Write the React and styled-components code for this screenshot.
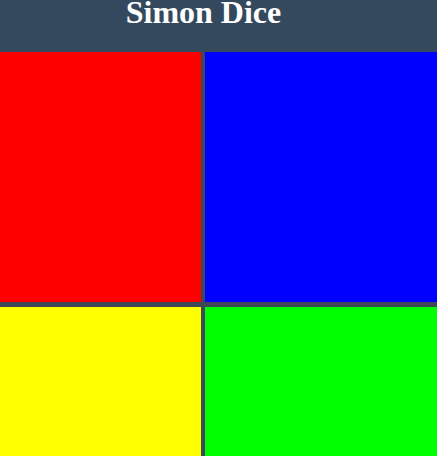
import React from "react";
import styled, { createGlobalStyle } from "styled-components";

const Global = createGlobalStyle`
  html, body { margin: 0; padding: 0; background: #3e4856; overflow: hidden; }
  #root { width: 437px; height: 456px; }
`;

const Page = styled.div`
  display: flex;
  flex-direction: column;
  width: 437px;
  height: 456px;
`;

const Header = styled.header`
  height: 52px;
  background: #34495e;
  display: flex;
  justify-content: center;
  align-items: flex-start;
  padding-right: 30px;
  box-sizing: border-box;
`;

const Title = styled.h1`
  margin: 0;
  font-family: "Liberation Serif", "Times New Roman", serif;
  font-weight: bold;
  font-size: 32px;
  line-height: 24px;
  color: #ffffff;
`;

const Board = styled.div`
  flex: 1;
  display: grid;
  grid-template-columns: 201px 1fr;
  grid-template-rows: 250px 1fr;
  column-gap: 4px;
  row-gap: 5px;
  background: #3e4856;
`;

const Pad = styled.div`
  background: ${(p) => p.$color};
`;

export default function App() {
  return (
    <Page>
      <Global />
      <Header>
        <Title>Simon Dice</Title>
      </Header>
      <Board>
        <Pad $color="#ff0000" />
        <Pad $color="#0000ff" />
        <Pad $color="#ffff00" />
        <Pad $color="#00ff00" />
      </Board>
    </Page>
  );
}
